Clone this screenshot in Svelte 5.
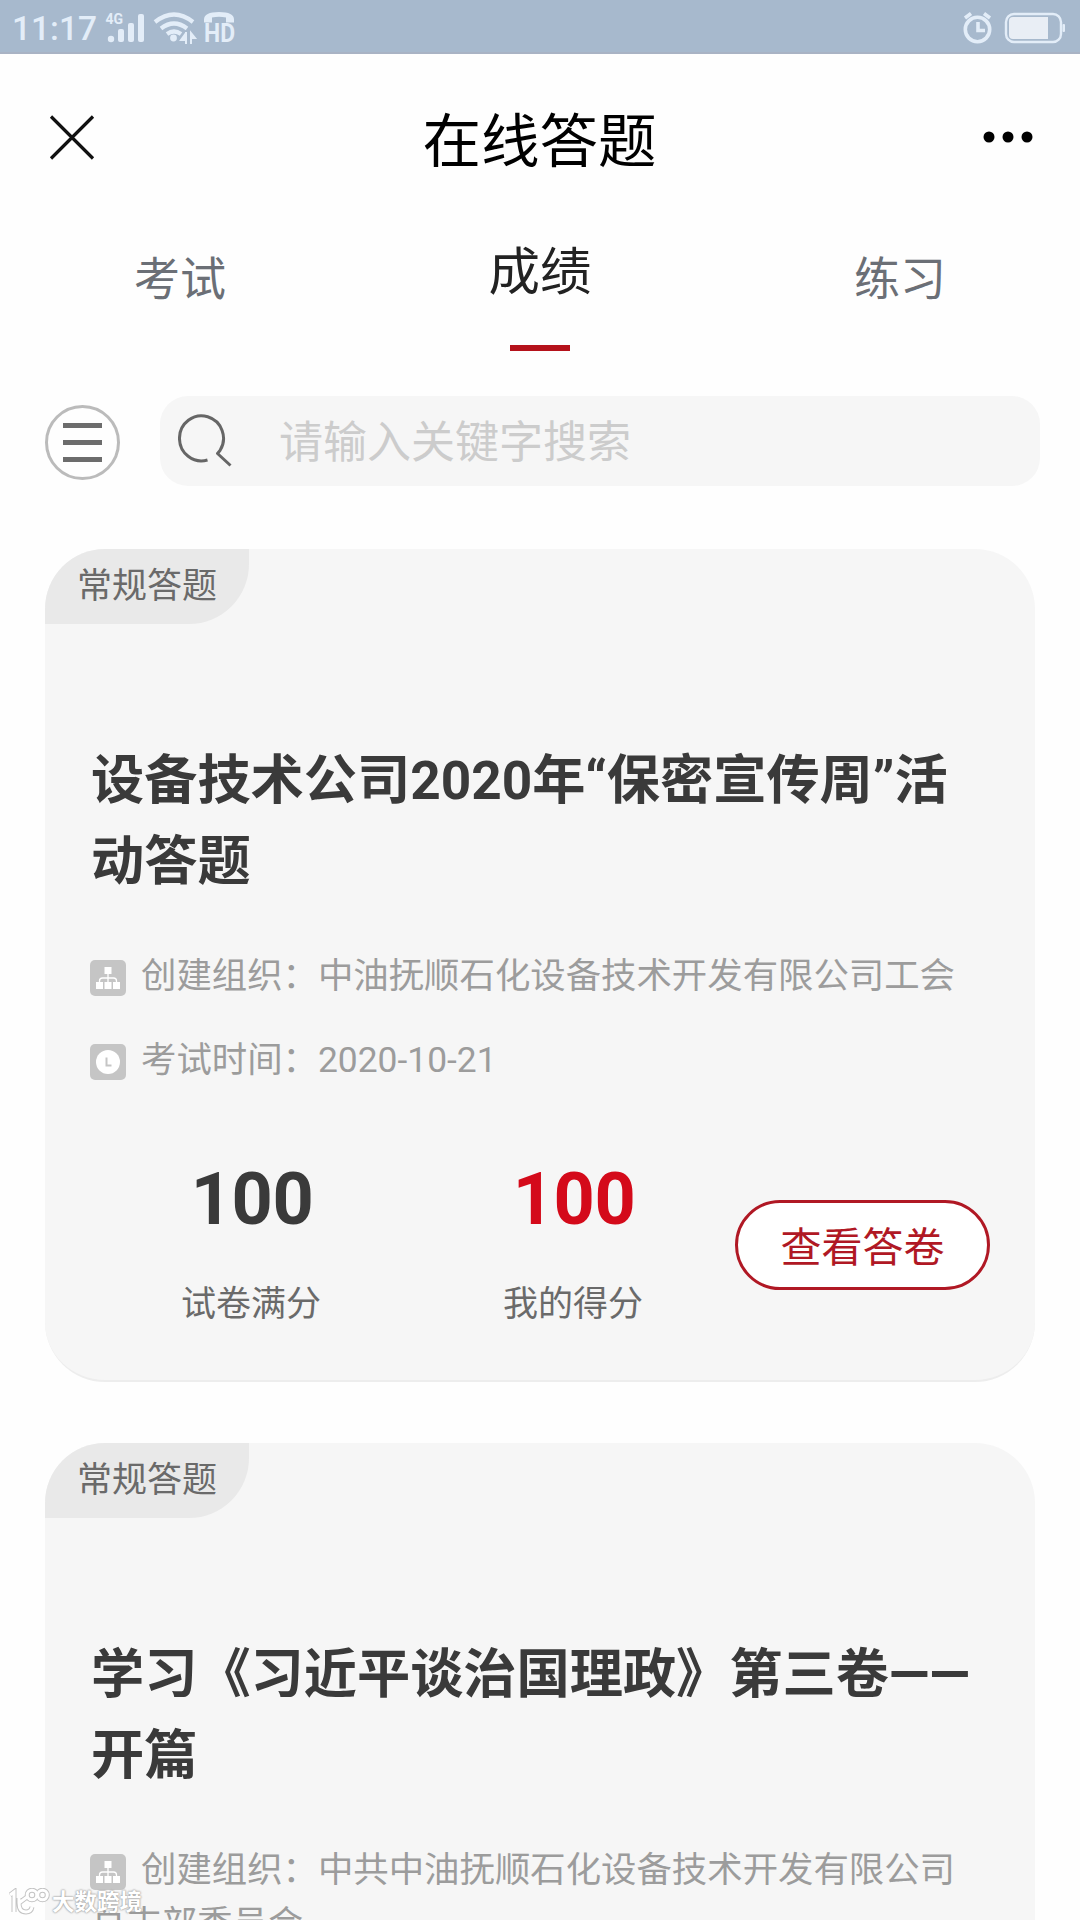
<script>
  const tabs = ["考试", "成绩", "练习"];
  let activeTab = 1;
  let keyword = "";

  const exams = [
    {
      type: "常规答题",
      title: "设备技术公司2020年“保密宣传周”活动答题",
      org: "中油抚顺石化设备技术开发有限公司工会",
      date: "2020-10-21",
      full: 100,
      score: 100,
    },
    {
      type: "常规答题",
      title: "学习《习近平谈治国理政》第三卷——开篇",
      org: "中共中油抚顺石化设备技术开发有限公司总支部委员会",
      date: "2020-10-21",
      full: 100,
      score: 100,
    },
  ];
</script>

<main>
  <div class="status">
    <span class="status__time">11:17</span>
    <svg class="status__icons" width="132" height="38" viewBox="104 7 132 38">
      <text x="105.5" y="23" class="status__net">4G</text>
      <circle cx="111" cy="38" r="3.2" />
      <rect x="118" y="28" width="6" height="13" rx="2" />
      <rect x="128" y="22" width="6" height="19" rx="2" />
      <rect x="138" y="13" width="6" height="28" rx="2" />
      <g class="arc arc--wifi">
        <path d="M155 21Q174 6 193 21" />
        <path d="M161 27.500Q174 17.500 187 27.500" />
        <path d="M167 33Q174 28 181 33" />
      </g>
      <circle cx="173.500" cy="37" r="3.400" />
      <path d="M186 31v12M186 32l-5 7h6M191 43v-11l4 5h-4" class="thin" />
      <path d="M204 21.500v-3q0-7.500 15-7.500t15 7.500v3h-8v-5q-7-1.500-14 0v5z" />
      <text x="204" y="41" class="status__hd" textLength="31" lengthAdjust="spacingAndGlyphs">HD</text>
    </svg>
    <svg class="status__right" width="105" height="38" viewBox="962 7 105 38">
      <g class="arc">
        <circle cx="977.500" cy="28.500" r="12.200" />
        <path d="M965 17l6-4.500M990 17l-6-4.500" />
        <path d="M978 21v8.500h7" />
      </g>
      <rect class="battery" x="1006" y="13" width="55" height="28" rx="8" />
      <path class="battery__level" d="M1013 16h35v22h-35q-4 0-4-4v-14q0-4 4-4z" />
      <rect x="1062.500" y="23" width="2.500" height="8" rx="1" />
    </svg>
  </div>

  <header>
    <svg width="46" height="46" viewBox="0 0 46 46">
      <path d="M2 1.500L44 43.500M44 1.500L2 43.500" stroke="#111" stroke-width="3.2" />
    </svg>
    <h1>在线答题</h1>
    <svg width="52" height="14" viewBox="0 0 52 14">
      <circle cx="7" cy="6" r="5.500" />
      <circle cx="26" cy="6" r="5.500" />
      <circle cx="45" cy="6" r="5.500" />
    </svg>
  </header>

  <nav>
    {#each tabs as tab, i}
      <button
        class="tab {i === activeTab ? 'tab--active' : ''}"
        on:click={() => (activeTab = i)}>{tab}</button
      >
    {/each}
  </nav>

  <div class="search">
    <button class="menu" aria-label="menu">
      <i></i>
      <i></i>
      <i></i>
    </button>
    <label class="search__box">
      <svg width="56" height="56" viewBox="0 0 56 56">
        <path
          d="M29.500 47A22 22.500 0 1 1 42 37.500L39.500 40.500L52.500 52.500"
          fill="none"
          stroke="#666"
          stroke-width="3"
          stroke-linejoin="round"
        />
      </svg>
      <input placeholder="请输入关键字搜索" bind:value={keyword} />
    </label>
  </div>

  {#each exams as exam}
    <section class="card">
      <div class="card__tag">{exam.type}</div>
      <div class="card__body">
        <h2>{exam.title}</h2>
        <p class="meta">
          <svg width="36" height="36" viewBox="0 0 36 36">
            <rect width="36" height="36" rx="5" fill="#c5c5c5" />
            <path
              d="M14.500 7h7v7h-7zM6 22h7v7h-7zM14.500 22h7v7h-7zM23 22h7v7h-7z"
              fill="#fff"
            />
            <path
              d="M18 14v9M9.500 23v-2q0-3 3-3h11q3 0 3 3v2"
              fill="none"
              stroke="#fff"
              stroke-width="1.300"
            />
          </svg>创建组织：{exam.org}
        </p>
        <p class="meta">
          <svg width="36" height="36" viewBox="0 0 36 36">
            <rect width="36" height="36" rx="5" fill="#c5c5c5" />
            <circle cx="18" cy="18" r="12" fill="#fff" />
            <path d="M16.500 13.500v8h5" fill="none" stroke="#c5c5c5" stroke-width="2" />
          </svg>考试时间：{exam.date}
        </p>
        <div class="scores">
          <div class="score">
            <strong>{exam.full}</strong>
            <span>试卷满分</span>
          </div>
          <div class="score score--mine">
            <strong>{exam.score}</strong>
            <span>我的得分</span>
          </div>
          <button class="view">查看答卷</button>
        </div>
      </div>
    </section>
  {/each}

  <div class="watermark">
    <svg width="43" height="30" viewBox="0 0 43 30">
      <g class="watermark__edge">
        <path d="M1 7l4-3v20M10 10v5q0 9 7 9 5 0 6-5M10 15l8-6" />
        <circle cx="23" cy="7" r="4.800" />
        <circle cx="33.500" cy="7" r="4.800" />
      </g>
      <g class="watermark__fill">
        <path d="M1 7l4-3v20M10 10v5q0 9 7 9 5 0 6-5M10 15l8-6" />
        <circle cx="23" cy="7" r="4.800" />
        <circle cx="33.500" cy="7" r="4.800" />
      </g>
    </svg>
    <span>大数跨境</span>
  </div>
</main>

<style>
  :global(body) {
    margin: 0;
    background: #fefefe;
  }

  main {
    position: relative;
    width: 1080px;
    height: 1920px;
    overflow: hidden;
    background: #fefefe;
    font-family: Roboto, "Noto Sans CJK SC", sans-serif;
  }

  button {
    padding: 0;
    border: 0;
    background: none;
    font-family: inherit;
  }

  h1,
  h2,
  p {
    margin: 0;
  }

  .status {
    display: flex;
    align-items: center;
    box-sizing: border-box;
    height: 54px;
    padding: 2px 13px 0 12px;
    border-bottom: 2px solid #a9b3c4;
    background: #a7b9cd;
    color: #e3edf8;
    fill: #e3edf8;
  }
  .status__time {
    width: 92px;
    font-size: 33.5px;
    font-weight: 500;
    line-height: 44px;
    padding-top: 3px;
  }
  .status__net {
    font-size: 14px;
    font-weight: 700;
  }
  .status__hd {
    font-size: 25px;
    font-weight: 700;
  }
  .status__right {
    margin-left: auto;
  }
  .arc {
    fill: none;
    stroke: #e3edf8;
    stroke-width: 3.6;
  }
  .arc--wifi {
    stroke-width: 4.2;
  }
  .thin {
    stroke: #e3edf8;
    stroke-width: 2;
  }
  .battery {
    fill: none;
    stroke: #e3edf8;
    stroke-width: 2.4;
  }
  .battery__level {
    fill: #e9eef5;
  }

  header {
    display: flex;
    align-items: center;
    justify-content: space-between;
    height: 168px;
    padding: 0 46px 4px 49px;
  }
  h1 {
    color: #000;
    font-size: 58.5px;
    font-weight: 400;
    line-height: 80px;
    padding: 7px 0 0 2px;
  }

  nav {
    display: flex;
    height: 125px;
  }
  .tab {
    display: flex;
    flex: 1;
    flex-direction: column;
    align-items: center;
    color: #6b6f76;
    font-size: 46px;
    line-height: 106px;
  }
  .tab--active {
    color: #222;
    font-size: 51.5px;
    line-height: 93px;
  }
  .tab--active::after {
    content: "";
    width: 60px;
    height: 6px;
    margin-top: 26px;
    background: #b5121b;
  }

  .search {
    display: flex;
    align-items: center;
    gap: 40px;
    padding: 45px 40px 63px 45px;
  }
  .menu {
    display: flex;
    flex-direction: column;
    align-items: center;
    justify-content: center;
    gap: 12px;
    box-sizing: border-box;
    width: 75px;
    height: 75px;
    margin-top: 2px;
    border: 3px solid #bbb;
    border-radius: 50%;
  }
  .menu i {
    width: 39px;
    height: 5px;
    background: #6c6c6c;
  }
  .search__box {
    display: flex;
    flex: 1;
    align-items: center;
    height: 90px;
    padding-left: 18px;
    border-radius: 28px;
    background: #f6f6f6;
  }
  input {
    flex: 1;
    height: 70px;
    margin-left: 45px;
    padding: 4px 0 0;
    border: 0;
    background: none;
    font-family: inherit;
    font-size: 44px;
  }
  input::placeholder {
    color: #ccc;
  }

  .card {
    box-sizing: border-box;
    height: 833px;
    margin: 0 45px 61px;
    border-bottom: 2px solid #ededed;
    border-radius: 60px;
    background: #f6f6f6;
    overflow: hidden;
  }
  .card__tag {
    width: 204px;
    height: 75px;
    border-radius: 0 0 60px 0;
    background: #e9e9e9;
    color: #6a6a6a;
    font-size: 35px;
    line-height: 75px;
    text-indent: 32px;
  }
  .card__body {
    padding: 117px 45px 0 46px;
  }
  h2 {
    color: #3a3a3a;
    font-size: 53.2px;
    font-weight: 700;
    line-height: 81px;
    margin-bottom: 46px;
  }
  .meta {
    padding-right: 20px;
    color: #9c9c9c;
    font-size: 35.4px;
    line-height: 54px;
    margin-bottom: 30px;
  }
  .meta svg {
    margin: 0 15px 0 -1px;
    vertical-align: -8px;
  }

  .scores {
    display: flex;
    margin-top: 72px;
  }
  .score {
    display: flex;
    flex-direction: column;
    align-items: center;
    width: 322px;
    color: #6a6a6a;
    font-size: 35px;
    line-height: 50px;
  }
  .score strong {
    margin-bottom: 40px;
    padding-top: 1px;
    color: #3a3a3a;
    font-size: 72px;
    line-height: 80px;
    letter-spacing: -0.5px;
  }
  .score span {
    margin-right: 2px;
  }
  .score--mine strong {
    color: #d40a1a;
  }
  .view {
    flex: none;
    box-sizing: border-box;
    width: 255px;
    height: 90px;
    margin-top: 41px;
    padding-bottom: 3px;
    border: 3px solid #b01824;
    border-radius: 45px;
    background: #fff;
    color: #b01824;
    font-size: 41px;
  }

  /* sits over the list in the bottom corner */
  .watermark {
    position: absolute;
    left: 9px;
    bottom: 2px;
    display: flex;
    align-items: center;
    color: #fff;
    font-size: 22.5px;
    font-weight: 700;
    line-height: 30px;
    text-shadow:
      0 0 2px #999,
      0 0 2px #999;
  }
  .watermark span {
    margin-top: -3px;
  }
  .watermark__edge {
    fill: none;
    stroke: #c4c4c4;
    stroke-width: 5;
  }
  .watermark__fill {
    fill: none;
    stroke: #fff;
    stroke-width: 3;
  }
</style>
